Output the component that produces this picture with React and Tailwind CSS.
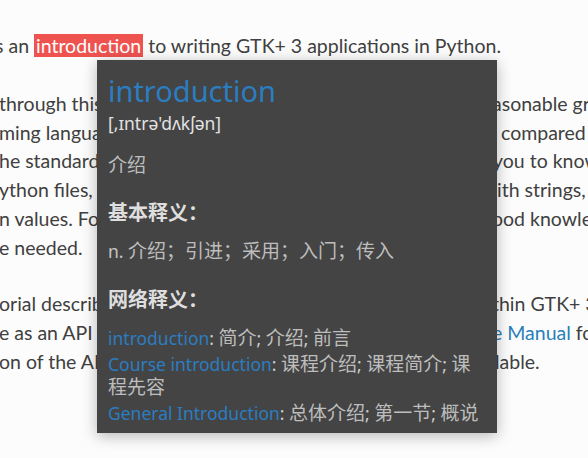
import React from "react";

const lines2 = [
    {left: "through this tutorial, it is recommended that", right: "asonable grasp of the Python", pad: "pl-0"},
    {left: "ming language. GUI programming introduces", right: "compared to interacting with", pad: "pl-[9px]"},
    {left: "he standard output (console / terminal). It is", right: "you to know how to create and run", pad: "pl-[1px]"},
    {left: "ython files, understand basic interpreter errors", right: "ith strings, integers, floats and", pad: "pl-[5px]"},
    {left: "n values. For the more advanced widgets in this", right: "ood knowledge of lists and tuples", pad: "pl-0"},
    {left: "e needed.", right: "", pad: "pl-0"},
];

const lines3 = [
    {left: "orial describes the most important classes and", right: "thin GTK+ 3, it is", pad: "pl-0"},
    {left: "e as an API reference. Please refer to the GTK+", right: <><span className="text-[#2980b9]">e Manual</span> for a</>, pad: "pl-0"},
    {left: "on of the API. Also there's a Python-specific", right: "lable.", pad: "pl-[3px]"},
];

export default function App() {
    return <div className="relative w-[588px] h-[458px] overflow-hidden bg-[#fcfcfc]">
        <div className="pt-[32px] text-[19.5px] leading-[28.75px] text-[#404040] font-['Lato','Noto_Sans',sans-serif]">
            <p className="whitespace-nowrap -ml-[5px]">
                s an <span className="bg-[#ef5350] text-white px-[2px]">introduction</span> to writing GTK+ 3 applications in Python.
            </p>
            <div className="mt-[29px]">
                {lines2.map((line, i) => <TextLine key={i} line={line}/>)}
            </div>
            <div className="mt-[28px]">
                {lines3.map((line, i) => <TextLine key={i} line={line}/>)}
            </div>
        </div>
        <DictPopup/>
    </div>
}

function TextLine({line}) {
    return <div className="flex whitespace-nowrap">
        <span className="w-[493px] shrink-0 overflow-hidden -ml-[1px]">{line.left}</span>
        <span className={line.pad}>{line.right}</span>
    </div>
}

// CJK glyphs in the reference come out a bit wider and thinner than the latin text
function Zh({children}) {
    return <span className="text-[19px] text-[#bdbdbd]">{children}</span>
}

function DictPopup() {
    const entries = [
        {word: "introduction", meaning: ["简介", "介绍", "前言"]},
        {word: "Course introduction", meaning: ["课程介绍", "课程简介", "课程先容"]},
        {word: "General Introduction", meaning: ["总体介绍", "第一节", "概说"]},
    ];

    return <div
        className="absolute left-[97px] top-[60px] w-[400px] bg-[#444444] px-[11px] pt-[11px] pb-[8px] shadow-[0_3px_14px_rgba(0,0,0,0.28)] font-['Noto_Sans','Noto_Sans_CJK_SC',sans-serif]">
        <div className="text-[29px] leading-[40px] text-[#2b7dc1]">introduction</div>
        <div className="text-[17.5px] leading-[24px] text-[#e2e2e2]">[,ɪntrə'dʌkʃən]</div>
        <div className="mt-[18px] text-[17.5px] leading-[24px]"><Zh>介绍</Zh></div>
        <div className="mt-[22px] text-[20px] leading-[27px] font-bold text-[#dedede]">基本释义：</div>
        <div className="mt-[13px] text-[17.5px] leading-[24px] text-[#c6c6c6]">
            n. <Zh>介绍；引进；采用；入门；传入</Zh>
        </div>
        <div className="mt-[23px] text-[20px] leading-[27px] font-bold text-[#dedede]">网络释义：</div>
        <div className="mt-[14px] flex flex-col gap-[3px] text-[17.5px] leading-[23px]">
            {entries.map((entry) => <div key={entry.word} className="text-[#cfcfcf]">
                <span className="text-[#2b7dc1]">{entry.word}</span>: {entry.meaning.map((m, i) =>
                <React.Fragment key={m}>{i > 0 && "; "}<Zh>{m}</Zh></React.Fragment>)}
            </div>)}
        </div>
    </div>
}
